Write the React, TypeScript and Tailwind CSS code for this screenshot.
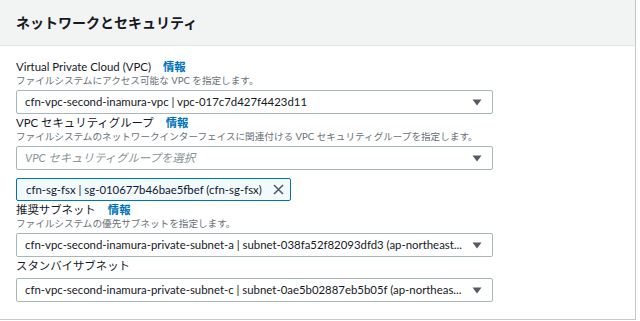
const font = "font-['Lato','Noto_Sans_CJK_JP',sans-serif]";

function Caret() {
  return (
    <svg width="10" height="7" viewBox="0 0 10 7" className="shrink-0">
      <path d="M0.5 0.5 L9.5 0.5 L5 6.5 Z" fill="#545b64" />
    </svg>
  );
}

function Label({ text, info }: { text: string; info?: boolean }) {
  return (
    <div className="flex items-center gap-[12px] text-[11.4px] leading-[14px] font-normal text-[#16191f]">
      <span>{text}</span>
      {info && <span className="font-bold text-[#0073bb]">情報</span>}
    </div>
  );
}

function Desc({ text }: { text: string }) {
  return <p className="text-[9.6px] leading-[13px] text-[#687078]">{text}</p>;
}

function Select({ value, placeholder, className = "" }: { value?: string; placeholder?: string; className?: string }) {
  return (
    <div
      className={`flex items-center h-[24px] w-[477px] border border-[#aab7b8] rounded-[2px] bg-white pl-[8px] pr-[10px] gap-2 ${className}`}
    >
      <span
        className={`flex-1 truncate text-[11.4px] ${placeholder ? "italic text-[#879596]" : "text-[#16191f]"}`}
      >
        {value ?? placeholder}
      </span>
      <Caret />
    </div>
  );
}

export default function App() {
  return (
    <div className={`w-[640px] h-[321px] bg-white ${font}`}>
      <div className="w-[636px] h-[320px] border-r border-b border-[#c6cacb] bg-white">
        <div className="h-[46px] bg-[#f2f3f3] border-b border-[#e4e7e7] flex items-center px-4">
          <h2 className="text-[14px] font-bold text-[#16191f]">ネットワークとセキュリティ</h2>
        </div>

        <div className="px-4 pt-[14px] flex flex-col">
          <Label text="Virtual Private Cloud (VPC)" info />
          <Desc text="ファイルシステムにアクセス可能な VPC を指定します。" />
          <Select className="mt-[3px]" value="cfn-vpc-second-inamura-vpc | vpc-017c7d427f4423d11" />

          <div className="mt-[2px]">
            <Label text="VPC セキュリティグループ" info />
          </div>
          <Desc text="ファイルシステムのネットワークインターフェイスに関連付ける VPC セキュリティグループを指定します。" />
          <Select className="mt-[3px]" placeholder="VPC セキュリティグループを選択" />

          <div className="mt-[8px] self-start flex items-center gap-[11px] h-[23px] border border-[#0073bb] rounded-[2px] bg-[#f1faff] pl-[9px] pr-[6px]">
            <span className="whitespace-nowrap text-[11.4px] text-[#16191f]">
              cfn-sg-fsx | sg-010677b46bae5fbef (cfn-sg-fsx)
            </span>
            <svg width="11" height="11" viewBox="0 0 11 11" className="shrink-0">
              <path d="M1 1 L10 10 M10 1 L1 10" stroke="#545b64" strokeWidth="1.6" />
            </svg>
          </div>

          <div className="mt-[2px]">
            <Label text="推奨サブネット" info />
          </div>
          <Desc text="ファイルシステムの優先サブネットを指定します。" />
          <Select
            className="mt-[3px]"
            value="cfn-vpc-second-inamura-private-subnet-a | subnet-038fa52f82093dfd3 (ap-northeast..."
          />

          <div className="mt-[2px]">
            <Label text="スタンバイサブネット" />
          </div>
          <Select
            className="mt-[5px]"
            value="cfn-vpc-second-inamura-private-subnet-c | subnet-0ae5b02887eb5b05f (ap-northeas..."
          />
        </div>
      </div>
    </div>
  );
}
